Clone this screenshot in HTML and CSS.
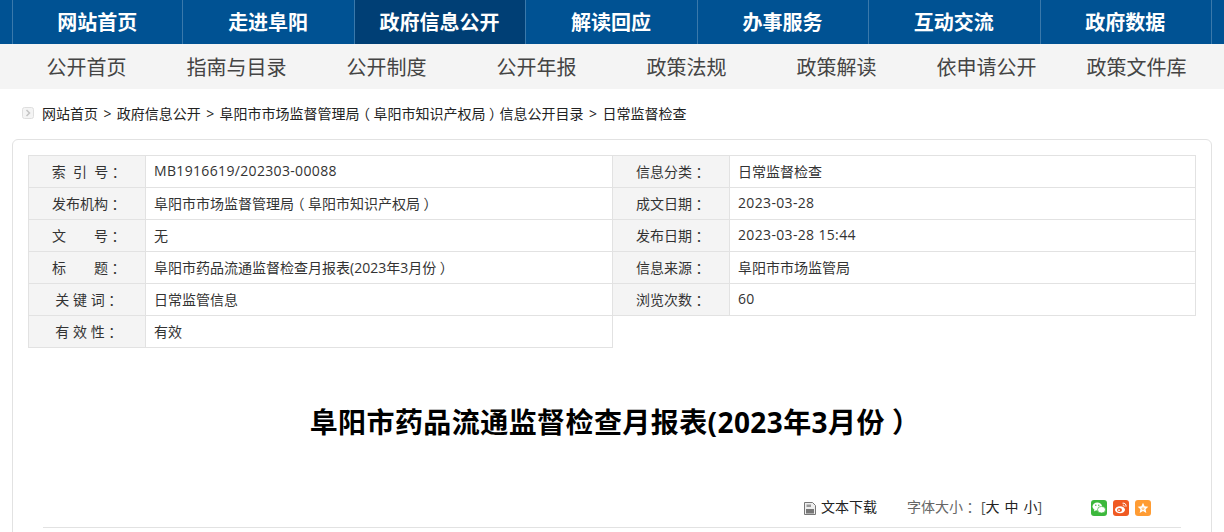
FILE: index.html
```html
<!DOCTYPE html>
<html lang="zh-CN">
<head>
<meta charset="utf-8">
<title>阜阳市药品流通监督检查月报表</title>
<link rel="stylesheet" href="styles.css">
</head>
<body>
<nav class="topnav">
  <div class="topnav-inner">
    <a class="top-item">网站首页</a>
    <a class="top-item">走进阜阳</a>
    <a class="top-item active">政府信息公开</a>
    <a class="top-item">解读回应</a>
    <a class="top-item">办事服务</a>
    <a class="top-item">互动交流</a>
    <a class="top-item">政府数据</a>
  </div>
</nav>
<nav class="subnav">
  <a class="sub-item">公开首页</a>
  <a class="sub-item">指南与目录</a>
  <a class="sub-item">公开制度</a>
  <a class="sub-item">公开年报</a>
  <a class="sub-item">政策法规</a>
  <a class="sub-item">政策解读</a>
  <a class="sub-item">依申请公开</a>
  <a class="sub-item">政策文件库</a>
</nav>
<div class="crumbs">
  <svg class="crumb-icon" width="12" height="12" viewBox="0 0 12 12"><rect x="0.5" y="0.5" width="11" height="11" rx="2" fill="#f4f4f4" stroke="#dedede"/><path d="M4.5 3l3 3-3 3" fill="none" stroke="#c4c4c4" stroke-width="1.5"/></svg>
  <span>网站首页</span><span class="sep">&gt;</span><span>政府信息公开</span><span class="sep">&gt;</span><span>阜阳市市场监督管理局<span class="fw">（</span>阜阳市知识产权局<span class="fw">）</span>信息公开目录</span><span class="sep">&gt;</span><span>日常监督检查</span>
</div>
<main class="panel">
  <table class="meta">
    <colgroup><col class="c-label"><col class="c-value"><col class="c-label"><col class="c-value-end"></colgroup>
    <tr><th>索&nbsp;&nbsp;引&nbsp;&nbsp;号<span class="fw">：</span></th><td class="num">MB1916619/202303-00088</td><th>信息分类<span class="fw">：</span></th><td>日常监督检查</td></tr>
    <tr><th>发布机构<span class="fw">：</span></th><td>阜阳市市场监督管理局<span class="fw">（</span>阜阳市知识产权局<span class="fw">）</span></td><th>成文日期<span class="fw">：</span></th><td class="num">2023-03-28</td></tr>
    <tr><th>文&emsp;&emsp;号<span class="fw">：</span></th><td>无</td><th>发布日期<span class="fw">：</span></th><td class="num">2023-03-28 15:44</td></tr>
    <tr><th>标&emsp;&emsp;题<span class="fw">：</span></th><td>阜阳市药品流通监督检查月报表(2023年3月份<span class="fw">）</span></td><th>信息来源<span class="fw">：</span></th><td>阜阳市市场监管局</td></tr>
    <tr><th>关&nbsp;键&nbsp;词<span class="fw">：</span></th><td>日常监管信息</td><th>浏览次数<span class="fw">：</span></th><td class="num">60</td></tr>
    <tr><th>有&nbsp;效&nbsp;性<span class="fw">：</span></th><td>有效</td></tr>
  </table>
  <h1 class="title">阜阳市药品流通监督检查月报表(2023年3月份<span class="fw">）</span></h1>
  <div class="tools">
    <svg class="doc-icon" width="12" height="13" viewBox="0 0 12 13"><path d="M.5.500h8L11.500 3.500V12.500H.5z" fill="#eee" stroke="#777"/><rect x="2" y="7" width="8" height="4.500" fill="#777"/><rect x="2.500" y="2.500" width="4.500" height="2.500" fill="#999"/></svg>
    <span class="download">文本下载</span>
    <span class="size-label">字体大小<span class="fw">：</span></span>
    <span class="size-opts">[<b>大</b><b>中</b><b>小</b>]</span>
    <div class="shares">
      <span class="share wx"><svg width="16" height="16" viewBox="0 0 16 16"><ellipse cx="6.300" cy="6.500" rx="4.800" ry="4" fill="#fff"/><path d="M3.500 9.500l-.6 2 2.200-1.200z" fill="#fff"/><ellipse cx="10.500" cy="9.700" rx="4" ry="3.300" fill="#fff" stroke="#3cb83c" stroke-width=".7"/><circle cx="4.800" cy="5.300" r=".7" fill="#3cb83c"/><circle cx="7.800" cy="5.300" r=".7" fill="#3cb83c"/></svg></span>
      <span class="share wb"><svg width="16" height="16" viewBox="0 0 16 16"><ellipse cx="7" cy="9.800" rx="5" ry="3.500" fill="#fff"/><ellipse cx="6.500" cy="10" rx="2.500" ry="1.900" fill="#f05a22"/><circle cx="6" cy="10.200" r=".9" fill="#fff"/><path d="M9.500 3.200c2.200-.5 4 1.100 3.500 3.500M9.800 5.200c1-.2 1.600.4 1.400 1.400" fill="none" stroke="#fff" stroke-width="1"/></svg></span>
      <span class="share st"><svg width="16" height="16" viewBox="0 0 16 16"><path d="M8 2.800l1.600 3.400 3.700.5-2.700 2.500.7 3.700L8 11.100l-3.300 1.800.7-3.700-2.700-2.500 3.700-.5z" fill="#fff"/><path d="M8 6.500l.6 1.300 1.400.2-1 1 .3 1.400L8 9.700l-1.300.7.300-1.400-1-1 1.400-.2z" fill="#ffc98d"/></svg></span>
    </div>
  </div>
  <div class="rule"></div>
</main>
</body>
</html>
```

FILE: styles.css
```css
* { box-sizing: border-box; }
html, body { margin: 0; padding: 0; }
body {
  height: 532px;
  overflow: hidden;
  background: #fff;
  color: #333;
  font-family: "Open Sans", "Noto Sans CJK SC", sans-serif;
  font-size: 14px;
}
.fw {
  font-feature-settings: "halt";
  padding: 0 .25em;
}
.topnav { height: 44px; background: #005293; padding-left: 12px; }
.topnav-inner {
  display: flex;
  width: 1200px;
  height: 44px;
}
.top-item {
  flex: 0 0 calc(100% / 7);
  border-right: 1px solid #3a79ab;
  padding-right: 1px;
  color: #fff;
  font-size: 20px;
  font-weight: 700;
  line-height: 45px;
  text-align: center;
}
.top-item:first-child { border-left: 1px solid #3a79ab; }
.top-item.active { background: #003f75; }
.subnav {
  display: flex;
  height: 45px;
  padding-left: 11.500px;
  background: #f4f4f4;
}
.sub-item {
  width: 150px;
  color: #444;
  font-size: 20px;
  line-height: 47px;
  text-align: center;
  white-space: nowrap;
}
.crumbs {
  display: flex;
  align-items: center;
  height: 50px;
  padding-left: 22px;
  padding-bottom: 2px;
  color: #222;
  font-size: 14px;
}
.crumb-icon { margin-right: 8px; }
.sep { margin: 0 5.400px; }
.panel {
  height: 420px;
  margin: 0 12px;
  padding: 15px;
  border: 1px solid #e2e2e2;
  border-radius: 6px;
}
.meta {
  width: 1167px;
  table-layout: fixed;
  border-collapse: collapse;
}
.c-label { width: 117px; }
.c-value { width: 467px; }
.c-value-end { width: 466px; }
.meta th, .meta td {
  height: 32px;
  padding: 0 0 2px;
  border: 1px solid #e2e2e2;
  color: #333;
  font-size: 14px;
  font-weight: 400;
  white-space: nowrap;
}
.meta th { background: #f4f4f4; text-align: center; }
.meta td { padding-left: 8px; }
.meta td.num { letter-spacing: .34px; }
.title {
  margin: 54px 0 0;
  padding-right: 1px;
  color: #000;
  font-size: 28px;
  font-weight: 700;
  letter-spacing: .42px;
  line-height: 40px;
  text-align: center;
}
.tools {
  display: flex;
  align-items: center;
  height: 16px;
  margin-top: 58px;
  padding-left: 776px;
  font-size: 14px;
}
.doc-icon { margin-right: 5px; }
.download { width: 86px; color: #222; padding-bottom: 4px; }
.size-label { width: 74px; color: #666; padding-bottom: 4px; }
.size-opts { color: #555; padding-bottom: 4px; }
.size-opts b { margin: 0 2.500px; font-weight: 400; color: #222; }
.size-opts b:first-child { margin-left: 0; }
.size-opts b:last-child { margin-right: 0; }
.shares { display: flex; gap: 6px; margin-left: 49px; }
.share { width: 16px; height: 16px; border-radius: 3px; display: block; }
.share svg { display: block; }
.wx { background: #3cb83c; }
.wb { background: #f05a22; }
.st { background: #ff9c33; }
.rule { height: 1px; margin: 11px 15px 0; background: #e2e2e2; }
```
